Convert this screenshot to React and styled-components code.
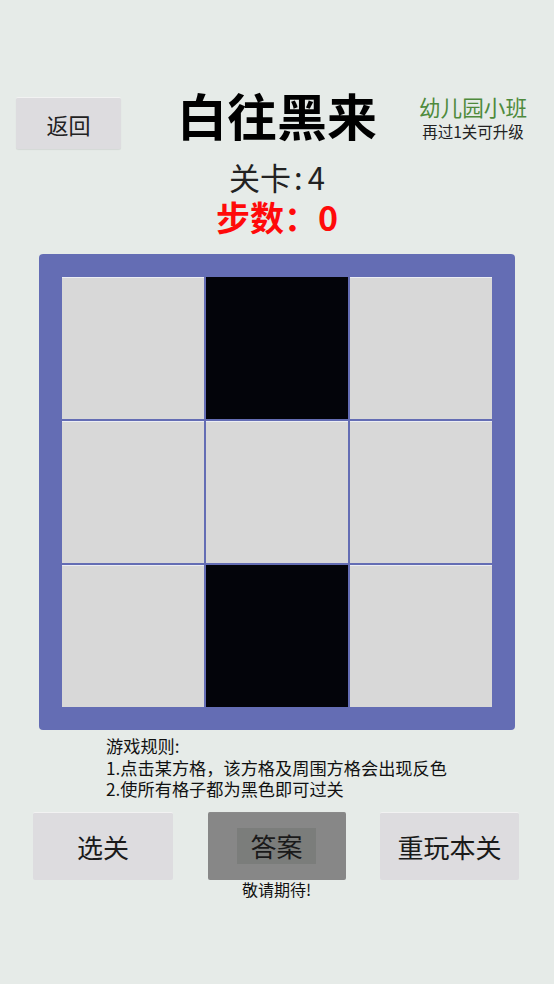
import React from "react";
import styled, { createGlobalStyle } from "styled-components";

const Global = createGlobalStyle`
  html, body {
    margin: 0;
    padding: 0;
    background: #e6ebe8;
    font-family: "Noto Sans CJK SC", "Noto Sans", sans-serif;
  }
`;

const Page = styled.div`
  width: 554px;
  height: 984px;
  display: flex;
  flex-direction: column;
  align-items: center;
  color: #111;
`;

const Header = styled.div`
  width: 100%;
  margin-top: 88px;
  display: grid;
  grid-template-columns: 1fr auto 1fr;
  align-items: start;
`;

const BackButton = styled.button`
  justify-self: start;
  margin: 9px 0 0 16px;
  width: 105px;
  height: 52px;
  border: none;
  border-top: 1px solid #f2f2f2;
  border-radius: 2px;
  background: #dddcdf;
  font-family: inherit;
  font-size: 22px;
  color: #222;
  box-shadow: 0 1px 1px rgba(0, 0, 0, 0.08);
`;

const Title = styled.h1`
  margin: 0;
  font-size: 50px;
  font-weight: 700;
  line-height: 52px;
  color: #000;
`;

const Rank = styled.div`
  justify-self: end;
  margin: 6px 27px 0 0;
  display: flex;
  flex-direction: column;
  align-items: center;
`;

const RankName = styled.span`
  font-size: 21.6px;
  line-height: 26px;
  color: #4e8a3c;
`;

const RankHint = styled.span`
  font-size: 15.5px;
  line-height: 22px;
  color: #222;
`;

const Level = styled.div`
  margin-top: 10px;
  font-size: 31px;
  line-height: 36px;
  color: #222;
`;

const Colon = styled.span`
  margin: 0 5px 0 3px;
`;

const Steps = styled.div`
  margin-top: 2px;
  font-size: 34px;
  line-height: 40px;
  font-weight: 700;
  color: #ff0a0a;
`;

const Board = styled.div`
  margin-top: 17px;
  width: 476px;
  height: 476px;
  box-sizing: border-box;
  padding: 23px 24px 24px 23px;
  background: #646db4;
  border-radius: 4px;
  display: grid;
  grid-template-columns: repeat(3, 142px);
  grid-template-rows: repeat(3, 142px);
  gap: 2px;
`;

const Cell = styled.div`
  background: ${(p) => (p.black ? "#03040a" : "#d8d8d8")};
  border-top: 1px solid ${(p) => (p.black ? "#03040a" : "#eceef4")};
  box-sizing: border-box;
`;

const Rules = styled.div`
  align-self: flex-start;
  margin: 5px 0 0 106px;
  font-size: 17.2px;
  line-height: 21.5px;
  color: #111;
`;

const Actions = styled.div`
  margin-top: 12px;
  width: 100%;
  display: grid;
  grid-template-columns: 140px 138px 139px;
  justify-content: space-between;
  padding: 0 35px 0 33px;
  box-sizing: border-box;
  align-items: start;
`;

const ActionSlot = styled.div`
  display: flex;
  flex-direction: column;
  align-items: center;
`;

const ActionButton = styled.button`
  width: 100%;
  height: 68px;
  border: none;
  border-top: 1px solid ${(p) => (p.disabled ? "#8a8a8a" : "#f2f2f2")};
  border-radius: 2px;
  background: ${(p) => (p.disabled ? "#878787" : "#dddcdf")};
  font-family: inherit;
  font-size: 26px;
  color: #1a1a1a;
  display: flex;
  align-items: center;
  justify-content: center;
  padding: 0;
`;

const Shade = styled.span`
  background: #7b7d7b;
  padding: 2px 13px;
  line-height: 32px;
`;

const Soon = styled.div`
  margin-top: 1px;
  font-size: 16px;
  line-height: 16px;
  color: #111;
`;

const board = [0, 1, 0, 0, 0, 0, 0, 1, 0];

export default function App() {
  return (
    <>
      <Global />
      <Page>
        <Header>
          <BackButton>返回</BackButton>
          <Title>白往黑来</Title>
          <Rank>
            <RankName>幼儿园小班</RankName>
            <RankHint>再过1关可升级</RankHint>
          </Rank>
        </Header>
        <Level>
          关卡<Colon>:</Colon>4
        </Level>
        <Steps>步数：0</Steps>
        <Board>
          {board.map((v, i) => (
            <Cell key={i} black={v === 1} />
          ))}
        </Board>
        <Rules>
          游戏规则:
          <br />
          1.点击某方格，该方格及周围方格会出现反色
          <br />
          2.使所有格子都为黑色即可过关
        </Rules>
        <Actions>
          <ActionSlot>
            <ActionButton>选关</ActionButton>
          </ActionSlot>
          <ActionSlot>
            <ActionButton disabled>
              <Shade>答案</Shade>
            </ActionButton>
            <Soon>敬请期待!</Soon>
          </ActionSlot>
          <ActionSlot>
            <ActionButton>重玩本关</ActionButton>
          </ActionSlot>
        </Actions>
      </Page>
    </>
  );
}
